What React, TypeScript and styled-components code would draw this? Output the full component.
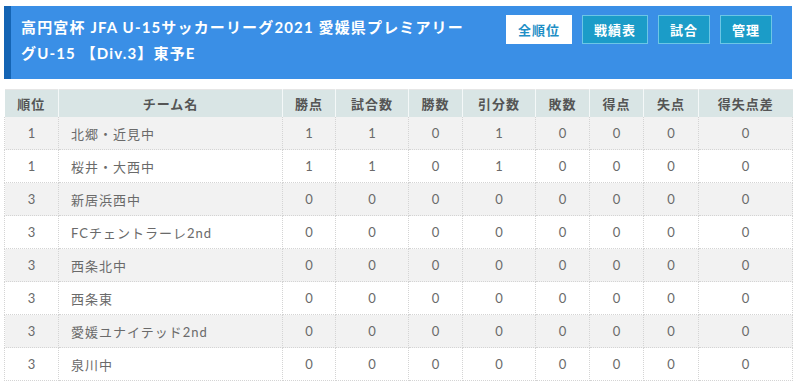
import React from "react";
import styled, { createGlobalStyle } from "styled-components";

const Global = createGlobalStyle`
  html, body { margin: 0; padding: 0; background: #fff; }
  body { font-family: "Lato", "Noto Sans CJK JP", sans-serif; }
`;

const Page = styled.div`
  padding: 6px 3px 0 4px;
  width: 788px;
  box-sizing: content-box;
`;

const Header = styled.header`
  display: flex;
  align-items: flex-start;
  justify-content: space-between;
  background: #3a8fe6;
  border-left: 7px solid #1464b4;
  height: 73px;
  box-sizing: border-box;
  padding: 8px 20px 0 10px;
`;

const Title = styled.h1`
  margin: 0;
  width: 450px;
  color: #fff;
  font-size: 15px;
  font-weight: 700;
  line-height: 26px;
  letter-spacing: 1.15px;
`;

const Nav = styled.nav`
  display: flex;
  gap: 10px;
  margin-top: 1px;
`;

const NavButton = styled.a<{ $active?: boolean }>`
  display: flex;
  align-items: center;
  justify-content: center;
  height: 29px;
  box-sizing: border-box;
  padding: 0 11px;
  font-size: 13px;
  font-weight: 700;
  text-decoration: none;
  letter-spacing: 1px;
  border: 1px solid ${(p) => (p.$active ? "#ffffff" : "#6cc6e6")};
  background: ${(p) => (p.$active ? "#ffffff" : "#1b9cc8")};
  color: ${(p) => (p.$active ? "#1f8fc6" : "#ffffff")};
`;

const Table = styled.table`
  margin-top: 10px;
  width: 788px;
  border-collapse: collapse;
  table-layout: fixed;
  font-size: 13px;
  color: #6a6a6a;
  border-top: 1px solid #e6e6e6;
`;

const Th = styled.th`
  background: #d9e5e5;
  color: #555;
  font-weight: 700;
  height: 27px;
  padding: 0;
  text-align: center;
  border-left: 1px solid #f4f8f8;
  letter-spacing: 1px;
  &:first-child { border-left: none; }
`;

const Row = styled.tr<{ $alt: boolean }>`
  background: ${(p) => (p.$alt ? "#f2f2f2" : "#ffffff")};
`;

const Td = styled.td<{ $left?: boolean }>`
  height: 32px;
  padding: 0 0 0 ${(p) => (p.$left ? "12px" : "0")};
  text-align: ${(p) => (p.$left ? "left" : "center")};
  border-bottom: 1px dotted #d4d4d4;
  border-left: 1px dotted #d4d4d4;
  border-right: 1px dotted #d4d4d4;
  letter-spacing: ${(p) => (p.$left ? "1px" : "0")};
`;

const cols = [54, 224, 53, 73, 54, 73, 54, 54, 55, 94];
const heads = ["順位", "チーム名", "勝点", "試合数", "勝数", "引分数", "敗数", "得点", "失点", "得失点差"];

const rows: (string | number)[][] = [
  [1, "北郷・近見中", 1, 1, 0, 1, 0, 0, 0, 0],
  [1, "桜井・大西中", 1, 1, 0, 1, 0, 0, 0, 0],
  [3, "新居浜西中", 0, 0, 0, 0, 0, 0, 0, 0],
  [3, "FCチェントラーレ2nd", 0, 0, 0, 0, 0, 0, 0, 0],
  [3, "西条北中", 0, 0, 0, 0, 0, 0, 0, 0],
  [3, "西条東", 0, 0, 0, 0, 0, 0, 0, 0],
  [3, "愛媛ユナイテッド2nd", 0, 0, 0, 0, 0, 0, 0, 0],
  [3, "泉川中", 0, 0, 0, 0, 0, 0, 0, 0],
];

export default function App() {
  return (
    <>
      <Global />
      <Page>
        <Header>
          <Title>高円宮杯 JFA U-15サッカーリーグ2021 愛媛県プレミアリーグU-15 【Div.3】東予E</Title>
          <Nav>
            <NavButton $active>全順位</NavButton>
            <NavButton>戦績表</NavButton>
            <NavButton>試合</NavButton>
            <NavButton>管理</NavButton>
          </Nav>
        </Header>
        <Table>
          <colgroup>
            {cols.map((w, i) => (
              <col key={i} style={{ width: w }} />
            ))}
          </colgroup>
          <thead>
            <tr>
              {heads.map((h) => (
                <Th key={h}>{h}</Th>
              ))}
            </tr>
          </thead>
          <tbody>
            {rows.map((r, i) => (
              <Row key={i} $alt={i % 2 === 0}>
                {r.map((c, j) => (
                  <Td key={j} $left={j === 1}>
                    {c}
                  </Td>
                ))}
              </Row>
            ))}
          </tbody>
        </Table>
      </Page>
    </>
  );
}
